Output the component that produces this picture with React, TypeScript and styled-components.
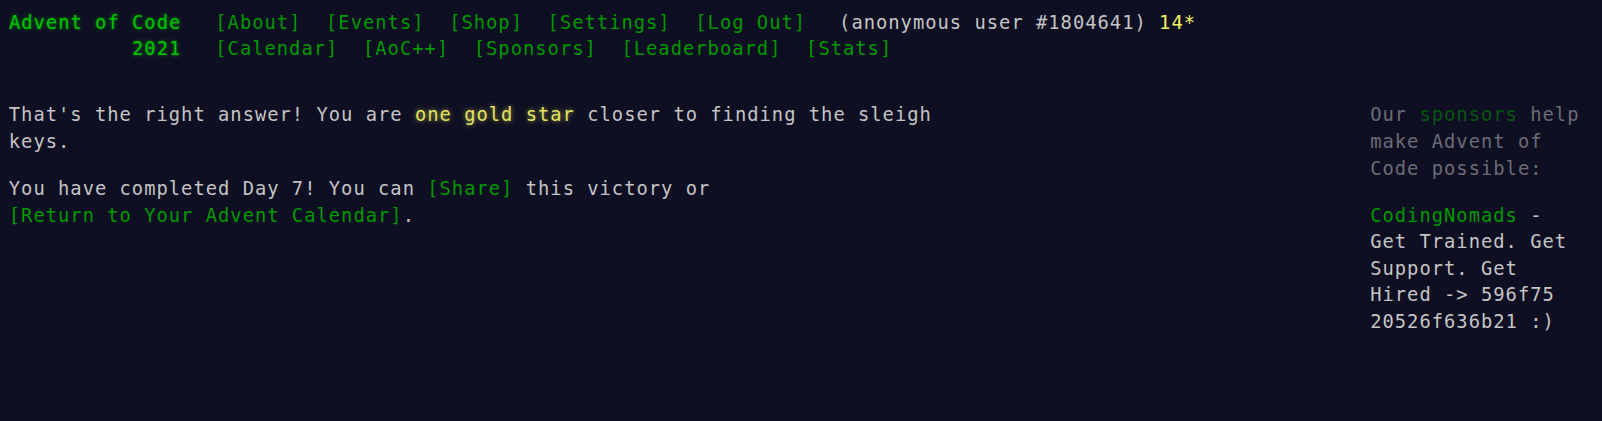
import React from "react";
import styled, { createGlobalStyle } from "styled-components";

const CH = 12.32;

const GlobalStyle = createGlobalStyle`
  html, body { background: #0f0f23; }
  body {
    margin: 8.8px;
    color: #c4c4c4;
    font-family: "DejaVu Sans Mono", "Liberation Mono", monospace;
    font-size: 18.8px;
    letter-spacing: 1px;
    line-height: 26.6px;
    min-width: 1230px;
  }
`;

const Link = styled.a`
  color: #009900;
  text-decoration: none;
  white-space: nowrap;
`;

const Header = styled.header`
  white-space: nowrap;
  line-height: 25.8px;
  padding-top: 1px;
  margin-bottom: 41px;
`;

const HeaderRow = styled.div`
  display: flex;
  align-items: baseline;
`;

const Title = styled.h1`
  flex: none;
  margin: 0 34px 0 0;
  width: ${14 * CH}px;
  font-size: 1em;
  font-weight: normal;
  text-align: right;
`;

const TitleLink = styled.a`
  color: #00c000;
  text-decoration: none;
  text-shadow: 0 0 2px rgba(0, 204, 0, 0.45), 0 0 5px rgba(0, 204, 0, 0.45);
`;

const NavList = styled.ul`
  display: flex;
  gap: ${2 * CH}px;
  margin: 0;
  padding: 0;
  list-style: none;
`;

const User = styled.div`
  margin-left: 33px;
`;

const StarCount = styled.span`
  color: #f2f262;
`;

const Content = styled.div`
  display: flex;
  justify-content: space-between;
  align-items: flex-start;
`;

const Article = styled.main`
  width: ${75 * CH + 2}px;
  display: flex;
  flex-direction: column;
  gap: 20.5px;
`;

const Para = styled.p`
  margin: 0;
`;

const GoldStar = styled.span`
  color: #e2e25e;
  text-shadow: 0 0 5px rgba(255, 255, 102, 0.6);
`;

const Sidebar = styled.aside`
  flex: none;
  width: 220px;
  margin-right: 3px;
  display: flex;
  flex-direction: column;
  gap: 20.5px;
`;

const Quiet = styled.p`
  margin: 0;
  opacity: 0.5;
`;

const topNav = ["[About]", "[Events]", "[Shop]", "[Settings]", "[Log Out]"];
const eventNav = ["[Calendar]", "[AoC++]", "[Sponsors]", "[Leaderboard]", "[Stats]"];

export default function App() {
  return (
    <>
      <GlobalStyle />
      <Header>
        <HeaderRow>
          <Title>
            <TitleLink href="#">Advent of Code</TitleLink>
          </Title>
          <NavList>
            {topNav.map((n) => (
              <li key={n}>
                <Link href="#">{n}</Link>
              </li>
            ))}
          </NavList>
          <User>
            (anonymous user #1804641) <StarCount>14*</StarCount>
          </User>
        </HeaderRow>
        <HeaderRow>
          <Title>
            <TitleLink href="#">2021</TitleLink>
          </Title>
          <NavList>
            {eventNav.map((n) => (
              <li key={n}>
                <Link href="#">{n}</Link>
              </li>
            ))}
          </NavList>
        </HeaderRow>
      </Header>
      <Content>
        <Article>
          <Para>
            That's the right answer! You are <GoldStar>one gold star</GoldStar> closer to
            finding the sleigh keys.
          </Para>
          <Para>
            You have completed Day 7! You can <Link href="#">[Share]</Link> this victory or{" "}
            <Link href="#">[Return to Your Advent Calendar]</Link>.
          </Para>
        </Article>
        <Sidebar>
          <Quiet>
            Our <Link href="#">sponsors</Link> help make Advent of Code possible:
          </Quiet>
          <Para>
            <Link href="#">CodingNomads</Link> - Get Trained. Get Support. Get Hired -&gt; 596f75
            20526f636b21 :)
          </Para>
        </Sidebar>
      </Content>
    </>
  );
}
